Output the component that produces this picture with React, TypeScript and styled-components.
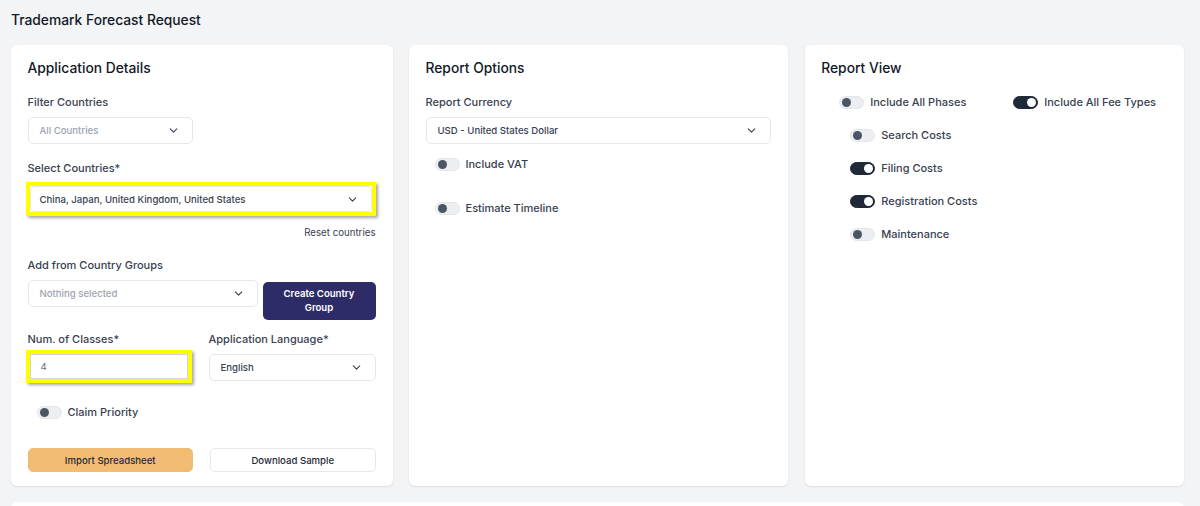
import styled, { createGlobalStyle } from 'styled-components'
import { ChevronDown } from 'lucide-react'

const GlobalStyle = createGlobalStyle`
  * { box-sizing: border-box; }
  html, body {
    margin: 0;
    padding: 0;
    background: #f3f4f6;
    font-family: Inter, "Noto Sans", "Liberation Sans", sans-serif;
    color: #111827;
  }
`

const Page = styled.div`
  padding: 10px 16px 0 11px;
  height: 506px;
  overflow: hidden;
`

const PageTitle = styled.h1`
  margin: 0 0 15px;
  font-size: 13.8px;
  line-height: 20px;
  font-weight: 500;
  color: #111827;
`

const Columns = styled.div`
  display: grid;
  grid-template-columns: repeat(3, 1fr);
  gap: 16.5px;
`

const Card = styled.section`
  background: #fff;
  border-radius: 6px;
  height: 441px;
  padding: 13px 17px 0 16.5px;
  box-shadow: 0 1px 2px rgba(0, 0, 0, 0.1);
`

const BottomCard = styled.div`
  margin-top: 16px;
  background: #fff;
  border-radius: 6px;
  height: 40px;
  box-shadow: 0 1px 2px rgba(0, 0, 0, 0.08);
`

const CardTitle = styled.h2`
  margin: 0 0 16px;
  font-size: 13.8px;
  line-height: 20px;
  font-weight: 500;
  color: #111827;
`

const Field = styled.div<{ $mb?: number; $width?: string }>`
  display: flex;
  flex-direction: column;
  margin-bottom: ${(p) => p.$mb ?? 16}px;
  width: ${(p) => p.$width ?? 'auto'};
  min-width: 0;
`

const Label = styled.label<{ $mb?: number }>`
  display: block;
  font-size: 11px;
  line-height: 16px;
  font-weight: 500;
  color: #374151;
  margin-bottom: ${(p) => p.$mb ?? 7}px;
`

const SelectBox = styled.div<{ $h?: number; $placeholder?: boolean }>`
  display: flex;
  align-items: center;
  justify-content: space-between;
  height: ${(p) => p.$h ?? 27}px;
  padding: 0 12px 0 11px;
  border: 1px solid #e5e7eb;
  border-radius: 5px;
  background: #fff;
  font-size: 9.6px;
  font-weight: 500;
  color: ${(p) => (p.$placeholder ? '#9ca3af' : '#374151')};
  svg {
    color: #374151;
    flex-shrink: 0;
  }
`

const Highlight = styled.div`
  border: 4px solid #ffff00;
  box-shadow: 2px 2px 3px rgba(0, 0, 0, 0.35);
  margin-left: -2px;

  ${SelectBox} {
    padding-left: 9px;
  }
`

const PlainInput = styled.div`
  display: flex;
  align-items: center;
  height: 25px;
  padding: 0 10px;
  background: #fff;
  border: 1px solid #d1d5db;
  font-size: 9.6px;
  color: #6b7280;
`

const LinkRow = styled.div`
  display: flex;
  justify-content: flex-end;
  font-size: 9.7px;
  line-height: 14px;
  color: #374151;
  margin: 10px 0 17px;
`

const Row = styled.div<{ $gap?: number; $mb?: number }>`
  display: flex;
  gap: ${(p) => p.$gap ?? 17}px;
  align-items: flex-start;
  margin-bottom: ${(p) => p.$mb ?? 0}px;
`

const DarkButton = styled.button`
  flex-shrink: 0;
  width: 113px;
  height: 38px;
  margin-top: 2px;
  border: none;
  border-radius: 5px;
  background: #2e2c68;
  color: #fff;
  font-family: inherit;
  font-size: 9.6px;
  font-weight: 600;
  line-height: 14px;
`

const ActionButton = styled.button<{ $primary?: boolean }>`
  flex: 1;
  height: 24px;
  border-radius: 5px;
  border: 1px solid ${(p) => (p.$primary ? '#f0bb72' : '#e5e7eb')};
  background: ${(p) => (p.$primary ? '#f2bd72' : '#fff')};
  color: #1f2937;
  font-family: inherit;
  font-size: 9.6px;
  font-weight: 500;
`

const ToggleRow = styled.div<{ $indent?: number; $mb?: number }>`
  display: flex;
  align-items: center;
  gap: 6px;
  height: 16px;
  padding-left: ${(p) => p.$indent ?? 0}px;
  margin-bottom: ${(p) => p.$mb ?? 0}px;
  font-size: 11px;
  font-weight: 500;
  color: #374151;
`

const Track = styled.span<{ $on?: boolean }>`
  position: relative;
  width: 25px;
  height: 13px;
  border-radius: 7px;
  flex-shrink: 0;
  background: ${(p) => (p.$on ? '#1f2937' : '#eceef1')};
  border: 1px solid ${(p) => (p.$on ? '#1f2937' : '#e2e5ea')};
  &::after {
    content: '';
    position: absolute;
    top: 1px;
    left: ${(p) => (p.$on ? '13px' : '2px')};
    width: 9px;
    height: 9px;
    border-radius: 50%;
    background: ${(p) => (p.$on ? '#fff' : '#4b5563')};
  }
`

const ViewGrid = styled.div`
  display: flex;
  padding-left: 18px;
`

const ViewColumn = styled.div<{ $width?: number }>`
  display: flex;
  flex-direction: column;
  width: ${(p) => (p.$width ? `${p.$width}px` : 'auto')};
`

function Toggle({ label, on, indent, mb }: { label: string; on?: boolean; indent?: number; mb?: number }) {
  return (
    <ToggleRow $indent={indent} $mb={mb}>
      <Track $on={on} />
      {label}
    </ToggleRow>
  )
}

function Select({ value, placeholder, h }: { value: string; placeholder?: boolean; h?: number }) {
  return (
    <SelectBox $placeholder={placeholder} $h={h}>
      <span>{value}</span>
      <ChevronDown size={13} strokeWidth={2} />
    </SelectBox>
  )
}

export default function App() {
  return (
    <>
      <GlobalStyle />
      <Page>
        <PageTitle>Trademark Forecast Request</PageTitle>
        <Columns>
          <Card>
            <CardTitle>Application Details</CardTitle>
            <Field $width="165px">
              <Label>Filter Countries</Label>
              <Select value="All Countries" placeholder />
            </Field>
            <Field $mb={0}>
              <Label $mb={6}>Select Countries*</Label>
              <Highlight>
                <Select value="China, Japan, United Kingdom, United States" h={26} />
              </Highlight>
            </Field>
            <LinkRow>Reset countries</LinkRow>
            <Label $mb={7}>Add from Country Groups</Label>
            <Row $gap={5} $mb={11}>
              <Field $mb={0} $width="230px">
                <Select value="Nothing selected" placeholder />
              </Field>
              <DarkButton>
                Create Country
                <br />
                Group
              </DarkButton>
            </Row>
            <Row $gap={17} $mb={21}>
              <Field $mb={0} $width="164px">
                <Label $mb={3}>Num. of Classes*</Label>
                <Highlight>
                  <PlainInput>4</PlainInput>
                </Highlight>
              </Field>
              <Field $mb={0} style={{ flex: 1 }}>
                <Label $mb={7}>Application Language*</Label>
                <Select value="English" />
              </Field>
            </Row>
            <Toggle label="Claim Priority" indent={9} mb={28} />
            <Row $gap={17}>
              <ActionButton $primary>Import Spreadsheet</ActionButton>
              <ActionButton>Download Sample</ActionButton>
            </Row>
          </Card>

          <Card>
            <CardTitle>Report Options</CardTitle>
            <Field $mb={12}>
              <Label>Report Currency</Label>
              <Select value="USD - United States Dollar" />
            </Field>
            <Toggle label="Include VAT" indent={9} mb={28} />
            <Toggle label="Estimate Timeline" indent={9} />
          </Card>

          <Card>
            <CardTitle>Report View</CardTitle>
            <ViewGrid>
              <ViewColumn $width={174}>
                <Toggle label="Include All Phases" mb={17} />
                <Toggle label="Search Costs" indent={11} mb={17} />
                <Toggle label="Filing Costs" on indent={11} mb={17} />
                <Toggle label="Registration Costs" on indent={11} mb={17} />
                <Toggle label="Maintenance" indent={11} />
              </ViewColumn>
              <ViewColumn>
                <Toggle label="Include All Fee Types" on />
              </ViewColumn>
            </ViewGrid>
          </Card>
        </Columns>
        <BottomCard />
      </Page>
    </>
  )
}
